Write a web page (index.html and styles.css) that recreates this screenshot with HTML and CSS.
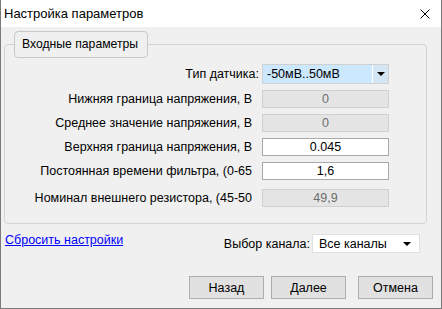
FILE: index.html
```html
<!DOCTYPE html>
<html lang="ru">
<head>
    <meta charset="UTF-8">
    <title>Настройка параметров</title>
    <link rel="stylesheet" href="styles.css">
</head>
<body>
    <div class="window">
        <div class="titlebar">
            <span class="title">Настройка параметров</span>
            <svg class="close" width="10" height="10" viewBox="0 0 10 10">
                <path d="M0.5 0.5 L9.5 9.5 M9.5 0.5 L0.5 9.5" stroke="#000" stroke-width="1" fill="none"/>
            </svg>
        </div>

        <div class="content">
            <fieldset class="group">
                <legend>Входные параметры</legend>

                <div class="row first">
                    <span class="label sensor">Тип датчика:</span>
                    <div class="combo">
                        <span class="combo-text">-50мВ..50мВ</span>
                        <span class="combo-arrow"><span class="tri"></span></span>
                    </div>
                </div>
                <div class="row">
                    <span class="label">Нижняя граница напряжения, В</span>
                    <div class="field disabled">0</div>
                </div>
                <div class="row">
                    <span class="label">Среднее значение напряжения, В</span>
                    <div class="field disabled">0</div>
                </div>
                <div class="row">
                    <span class="label">Верхняя граница напряжения, В</span>
                    <div class="field">0.045</div>
                </div>
                <div class="row">
                    <span class="label">Постоянная времени фильтра, (0-65</span>
                    <div class="field">1,6</div>
                </div>
                <div class="row last">
                    <span class="label">Номинал внешнего резистора, (45-50</span>
                    <div class="field disabled">49,9</div>
                </div>
            </fieldset>

            <div class="options">
                <a class="reset" href="#">Сбросить настройки</a>
                <div class="channel">
                    <span class="channel-label">Выбор канала:</span>
                    <div class="channel-combo">
                        <span>Все каналы</span>
                        <span class="tri"></span>
                    </div>
                </div>
            </div>

            <div class="buttons">
                <button>Назад</button>
                <button class="next">Далее</button>
                <button class="cancel">Отмена</button>
            </div>
        </div>
    </div>
</body>
</html>
```

FILE: styles.css
```css
body {
    margin: 0;
    font-family: "Liberation Sans", Arial, sans-serif;
    font-size: 12.5px;
    color: #000;
}
.window {
    width: 442px;
    height: 309px;
    box-sizing: border-box;
    border: 1px solid #7a7a7a;
    border-top: none;
    background-color: #f0f0f0;
    display: flex;
    flex-direction: column;
}
.titlebar {
    height: 27px;
    background-color: #fff;
    display: flex;
    align-items: center;
    padding-left: 3px;
    padding-right: 11px;
}
.title {
    font-size: 13px;
    flex: 1;
}
.close {
    display: block;
}
.content {
    flex: 1;
}
.group {
    width: 423px;
    box-sizing: border-box;
    margin: 4px 0 0 3px;
    padding: 0 0 16px 0;
    border: 1px solid #d3d3d3;
    border-radius: 4px;
}
.group legend {
    margin-left: 9px;
    padding: 0 0 0 7px;
    width: 134px;
    height: 27px;
    box-sizing: border-box;
    line-height: 25px;
    border: 1px solid #c8c8c8;
    border-radius: 4px;
    background-color: #f0f0f0;
    font-size: 12.2px;
    white-space: nowrap;
}
.row {
    display: flex;
    align-items: center;
    margin-top: 6px;
}
.row.first {
    margin-top: 6px;
}
.row.last {
    margin-top: 9px;
}
.label {
    width: 247px;
    margin-right: 10px;
    text-align: right;
    white-space: nowrap;
}
.label.sensor {
    width: 254px;
    margin-right: 3px;
}
.field {
    width: 127px;
    height: 18px;
    box-sizing: border-box;
    border: 1px solid #a9a9a9;
    background-color: #fff;
    text-align: center;
    line-height: 16px;
}
.field.disabled {
    border-color: #d0d0d0;
    background-color: #e5e5e5;
    color: #6d6d6d;
}
.combo {
    width: 127px;
    height: 20px;
    box-sizing: border-box;
    border: 1px solid #d0d0d0;
    display: flex;
    background-color: #d4e5f4;
}
.combo-text {
    width: 105px;
    background-color: #cce8ff;
    border-right: 1px solid #fff;
    padding-left: 4px;
    line-height: 18px;
}
.combo-arrow {
    flex: 1;
    display: flex;
    align-items: center;
    justify-content: center;
}
.tri {
    width: 0;
    height: 0;
    border-left: 4px solid transparent;
    border-right: 4px solid transparent;
    border-top: 4px solid #000;
}
.options {
    display: flex;
    align-items: flex-start;
    margin-top: 9px;
    padding: 0 21px 0 4px;
}
.reset {
    color: #0000ff;
    margin-top: 0;
}
.channel {
    margin-left: auto;
    display: flex;
    align-items: center;
    margin-top: 1px;
}
.channel-label {
    margin-right: 2px;
}
.channel-combo {
    width: 108px;
    height: 19px;
    box-sizing: border-box;
    border: 1px solid #e0e0e0;
    background-color: #fff;
    display: flex;
    align-items: center;
    justify-content: space-between;
    padding: 0 8px 0 6px;
}
.buttons {
    display: flex;
    justify-content: flex-end;
    margin-top: 23px;
    padding-right: 8px;
}
.buttons button {
    width: 75px;
    height: 23px;
    border: 1px solid #adadad;
    background-color: #e1e1e1;
    font-family: "Liberation Sans", Arial, sans-serif;
    font-size: 12.5px;
    color: #000;
    padding: 0;
}
.buttons .next {
    margin-left: 7px;
}
.buttons .cancel {
    margin-left: 12px;
}
```
